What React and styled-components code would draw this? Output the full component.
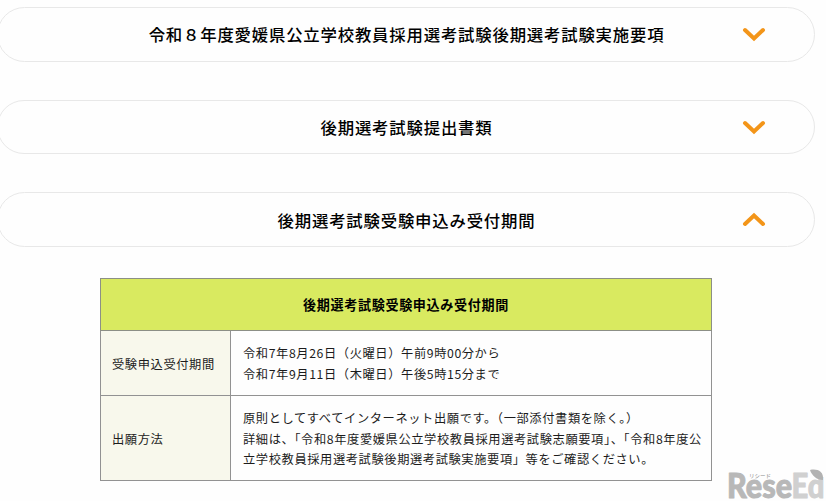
import React, { useState } from 'react';
import styled, { createGlobalStyle } from 'styled-components';

const GlobalStyle = createGlobalStyle`
  body {
    margin: 0;
    background: #fefefe;
    color: #1c1c1c;
    font-family: 'Noto Sans CJK JP', sans-serif;
    overflow: hidden;
  }
`;

const Page = styled.main`
  position: relative;
  height: 501px;
  overflow: hidden;
`;

const Accordion = styled.div`
  width: 818px;
  margin-left: -3px;
  padding-top: 7px;
  display: flex;
  flex-direction: column;
  gap: 38px;
`;

const Heading = styled.button`
  display: grid;
  grid-template-columns: 1fr auto 1fr;
  align-items: center;
  width: 100%;
  height: ${props => props.$height || 55}px;
  padding: 0 48px ${props => (props.$height ? 0 : 2)}px 49px;
  border: 1px solid #e8e8e8;
  border-radius: 28px;
  background: #fefefe;
  color: #000;
  font: inherit;
  cursor: pointer;

  &[aria-expanded='true'] {
    padding-bottom: 0;
  }
`;

const HeadingText = styled.span`
  grid-column: 2;
  font-size: 16.4px;
  font-weight: 500;
  line-height: 24px;
  letter-spacing: 0.8px;
  white-space: nowrap;
`;

const Chevron = styled.svg`
  justify-self: end;
  width: 24px;
  height: 16px;
  transform: ${props => (props.$open ? 'rotate(180deg)' : 'none')};
`;

const Panel = styled.div`
  margin-top: -7px;
  padding: 0 103px;
`;

const Table = styled.table`
  width: 612px;
  border-collapse: collapse;
  table-layout: fixed;
  font-size: 12.24px;
  line-height: 20.6px;
  letter-spacing: 0.61px;
`;

const Caption = styled.th`
  height: 49px;
  padding: 2px 0 0;
  border: 1px solid #8c8f86;
  background: #d9ea60;
  color: #000;
  font-size: 13.1px;
  font-weight: 700;
  letter-spacing: 0.65px;
`;

const Label = styled.th`
  padding: 2px 11px 0;
  border: 1px solid #929292;
  background: #f8f8ec;
  font-weight: 400;
  text-align: left;
  white-space: nowrap;
`;

const Value = styled.td`
  height: ${props => props.$height}px;
  padding: 2px 0 0 12px;
  border: 1px solid #929292;
  white-space: nowrap;
`;

const Watermark = styled.svg`
  position: absolute;
  left: 726px;
  top: 467px;
  width: 100px;
  height: 34px;
`;

const Section = ({ title, height, defaultOpen = false, children }) => {
  const [open, setOpen] = useState(defaultOpen);

  return (
    <>
      <Heading $height={height} aria-expanded={open} onClick={() => setOpen(!open)}>
        <HeadingText>{title}</HeadingText>
        <Chevron $open={open} viewBox="0 0 24 16">
          <path d="M3 4 L12 12.5 L21 4" fill="none" stroke="#f39519" strokeWidth="4" strokeLinecap="round" />
        </Chevron>
      </Heading>
      {open && children}
    </>
  );
};

const ReseEd = () => (
  <Watermark viewBox="0 0 100 34">
    <g fontFamily="Lato, sans-serif" fontWeight="900" fontSize="35" strokeWidth="1" strokeLinejoin="round">
      <text x="1" y="30.5" textLength="65" lengthAdjust="spacingAndGlyphs" fill="#b8b8b8" stroke="#b8b8b8">Rese</text>
      <text x="65.5" y="30.5" textLength="33" lengthAdjust="spacingAndGlyphs" fill="#d0d0d0" stroke="#d0d0d0">Ed</text>
    </g>
    {/* leaf on the stem of the d */}
    <path d="M91 2 H98 V10 H91Z" fill="#fefefe" />
    <path d="M84 3 C91 1.5 98 4 97 13 C91 13 86 9 84 3Z" fill="#b2b2b2" />
    <text x="23" y="10.5" fontFamily="'Noto Sans CJK JP', sans-serif" fontSize="5.5" textLength="22" fill="#8c8c8c">リシード</text>
  </Watermark>
);

export default function App() {
  return (
    <Page>
      <GlobalStyle />
      <Accordion>
        <Section title="令和８年度愛媛県公立学校教員採用選考試験後期選考試験実施要項" />
        <Section title="後期選考試験提出書類" height={54} />
        <Section title="後期選考試験受験申込み受付期間" defaultOpen>
          <Panel>
            <Table>
              <colgroup>
                <col width="130" />
                <col />
              </colgroup>
              <thead>
                <tr>
                  <Caption colSpan={2}>後期選考試験受験申込み受付期間</Caption>
                </tr>
              </thead>
              <tbody>
                <tr>
                  <Label>受験申込受付期間</Label>
                  <Value $height={62}>
                    令和7年8月26日（火曜日）午前9時00分から<br />
                    令和7年9月11日（木曜日）午後5時15分まで
                  </Value>
                </tr>
                <tr>
                  <Label>出願方法</Label>
                  <Value $height={82}>
                    原則としてすべてインターネット出願です。（一部添付書類を除く。）<br />
                    詳細は、「令和8年度愛媛県公立学校教員採用選考試験志願要項」、「令和8年度公<br />
                    立学校教員採用選考試験後期選考試験実施要項」等をご確認ください。
                  </Value>
                </tr>
              </tbody>
            </Table>
          </Panel>
        </Section>
      </Accordion>
      <ReseEd />
    </Page>
  );
}
